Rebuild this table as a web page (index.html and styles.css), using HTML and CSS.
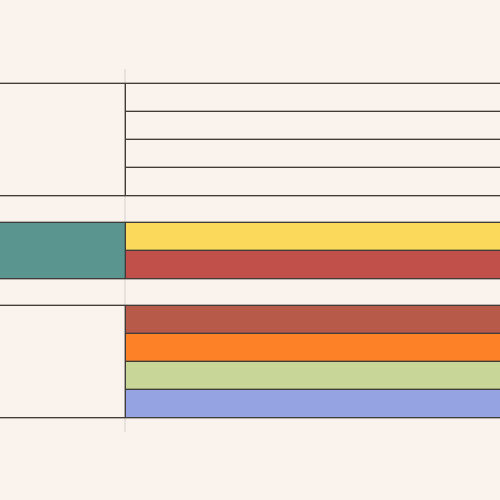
FILE: index.html
```html
<!DOCTYPE html>
<html>
<head>
<meta charset="utf-8">
<link rel="stylesheet" href="styles.css">
</head>
<body>
<div class="chart">
  <div class="group">
    <div class="left"></div>
    <div class="right">
      <div class="cell"></div>
      <div class="cell"></div>
      <div class="cell"></div>
      <div class="cell"></div>
    </div>
  </div>
  <div class="group">
    <div class="left teal"></div>
    <div class="right">
      <div class="cell yellow"></div>
      <div class="cell red"></div>
    </div>
  </div>
  <div class="group">
    <div class="left"></div>
    <div class="right">
      <div class="cell brick"></div>
      <div class="cell orange"></div>
      <div class="cell green"></div>
      <div class="cell blue"></div>
    </div>
  </div>
</div>
</body>
</html>
```
FILE: styles.css
```css
html, body {
  margin: 0;
  padding: 0;
  background: #faf2ec;
  width: 500px;
  height: 500px;
  overflow: hidden;
}
.chart {
  margin-top: 69px;
  padding: 14px 0 14px 0;
  display: flex;
  flex-direction: column;
  gap: 26px;
  background: linear-gradient(to right, transparent 124px, #e8e2de 124px, #e8e2de 126px, transparent 126px);
}
.group {
  display: flex;
  border-top: 1px solid #403c3a;
  border-bottom: 1px solid #403c3a;
  box-shadow: 0 -1px 0 rgba(64, 60, 58, 0.35), 0 1px 0 rgba(64, 60, 58, 0.35);
}
.left {
  width: 125px;
  flex: none;
  border-right: 1px solid #403c3a;
  box-shadow: inset -1px 0 0 rgba(64, 60, 58, 0.35);
}
.right {
  flex: 1;
  display: flex;
  flex-direction: column;
}
.cell {
  height: 27px;
}
.cell + .cell {
  border-top: 1px solid #403c3a;
  box-shadow: 0 -1px 0 rgba(64, 60, 58, 0.35);
}
.teal { background: #5a968f; }
.yellow { background: #fbd95a; }
.red { background: #c1504b; }
.brick { background: #b85a4a; }
.orange { background: #fd8126; }
.green { background: #c8d697; }
.blue { background: #95a3e2; }
```
